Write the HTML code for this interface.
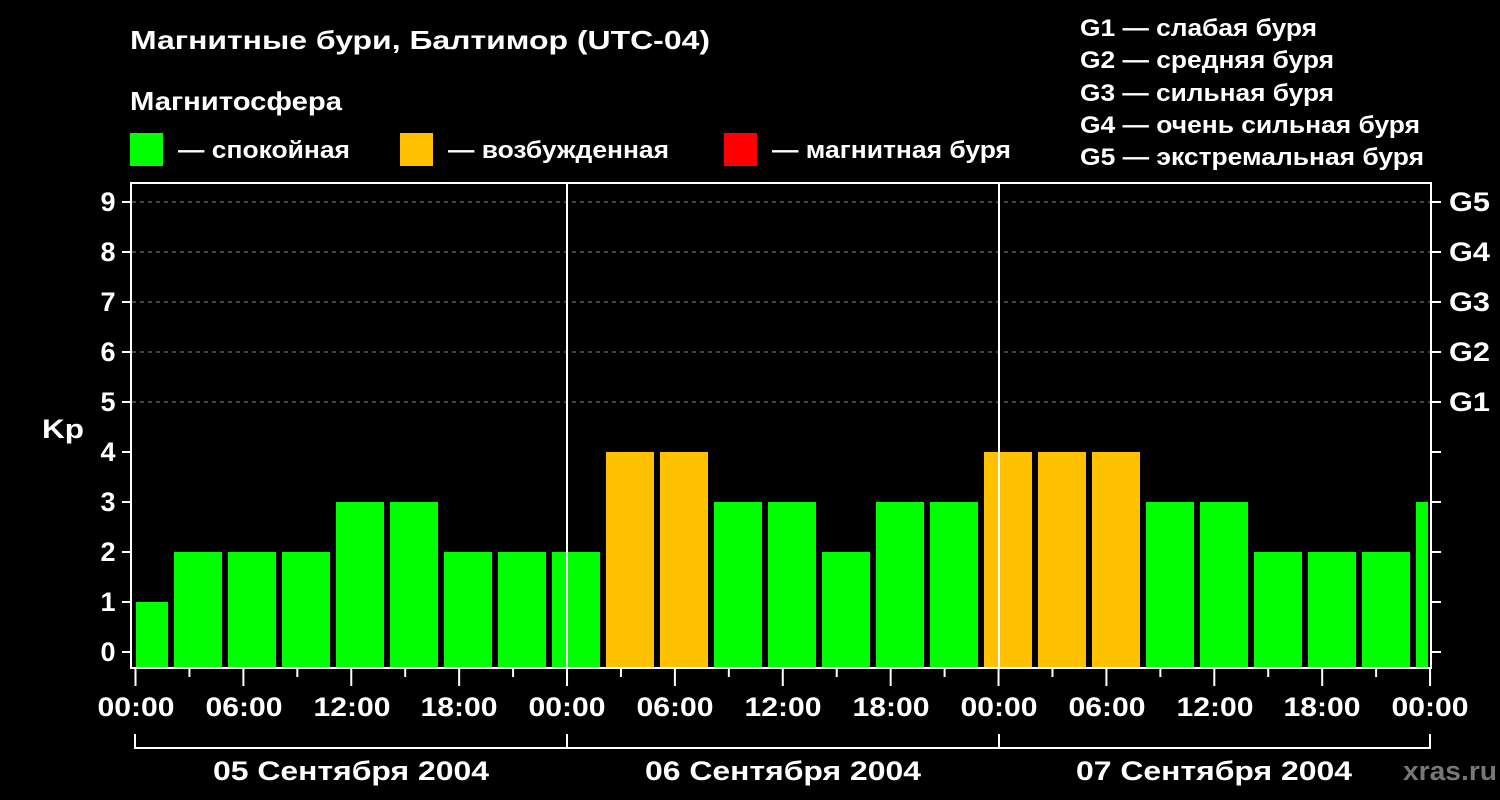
<!DOCTYPE html>
<html><head><meta charset="utf-8"><style>
html,body{margin:0;padding:0;background:#000;}
svg{display:block;font-family:"Liberation Sans",sans-serif;font-weight:bold;}
</style></head><body>
<svg width="1500" height="800" viewBox="0 0 1500 800" xmlns="http://www.w3.org/2000/svg">
<rect width="1500" height="800" fill="#000"/>
<g fill="#fff" font-size="26">
<text x="130" y="49" textLength="580" lengthAdjust="spacingAndGlyphs">Магнитные бури, Балтимор (UTC-04)</text>
<text x="130" y="110" textLength="212" lengthAdjust="spacingAndGlyphs">Магнитосфера</text>
<text x="178" y="158" font-size="24" textLength="172" lengthAdjust="spacingAndGlyphs">— спокойная</text>
<text x="448" y="158" font-size="24" textLength="221" lengthAdjust="spacingAndGlyphs">— возбужденная</text>
<text x="772" y="158" font-size="24" textLength="239" lengthAdjust="spacingAndGlyphs">— магнитная буря</text>
</g>
<rect x="130" y="133" width="33" height="33" fill="#00ff00"/>
<rect x="400" y="133" width="33" height="33" fill="#ffc000"/>
<rect x="724" y="133" width="33" height="33" fill="#ff0000"/>
<g fill="#fff" font-size="24">
<text x="1080" y="36" textLength="237" lengthAdjust="spacingAndGlyphs">G1 — слабая буря</text>
<text x="1080" y="68" textLength="254" lengthAdjust="spacingAndGlyphs">G2 — средняя буря</text>
<text x="1080" y="101" textLength="254" lengthAdjust="spacingAndGlyphs">G3 — сильная буря</text>
<text x="1080" y="133" textLength="340" lengthAdjust="spacingAndGlyphs">G4 — очень сильная буря</text>
<text x="1080" y="165" textLength="344" lengthAdjust="spacingAndGlyphs">G5 — экстремальная буря</text>
</g>
<g stroke="#888" stroke-dasharray="4,4" stroke-width="1">
<line x1="132" y1="202" x2="1431" y2="202"/><line x1="132" y1="252" x2="1431" y2="252"/>
<line x1="132" y1="302" x2="1431" y2="302"/><line x1="132" y1="352" x2="1431" y2="352"/>
<line x1="132" y1="402" x2="1431" y2="402"/>
</g>
<g id="bars">
<rect x="136" y="602" width="32" height="66" fill="#00ff00"/>
</g>
<script>
var v=[2,2,2,3,3,2,2,2,4,4,3,3,2,3,3,4,4,4,3,3,2,2,2,3];
var g=document.getElementById('bars');
for(var k=0;k<24;k++){var x=174+54*k,w=48;if(x+w>1428)w=1428-x;var y=652-50*v[k];
var r=document.createElementNS('http://www.w3.org/2000/svg','rect');
r.setAttribute('x',x);r.setAttribute('y',y);r.setAttribute('width',w);r.setAttribute('height',668-y);
r.setAttribute('fill',v[k]>=4?'#ffc000':'#00ff00');g.appendChild(r);}
</script>
<g stroke="#fff" stroke-width="2" fill="none">
<rect x="131" y="183" width="1300" height="485"/>
<line x1="567" y1="183" x2="567" y2="668"/><line x1="999" y1="183" x2="999" y2="668"/>
<path d="M122 652h9M122 602h9M122 552h9M122 502h9M122 452h9M122 402h9M122 352h9M122 302h9M122 252h9M122 202h9"/>
<path d="M1431 652h10M1431 602h10M1431 552h10M1431 502h10M1431 452h10M1431 402h10M1431 352h10M1431 302h10M1431 252h10M1431 202h10"/>
<path d="M135 734v14h1295v-14M567 734v14M999 734v14"/>
</g>
<g id="ticks" stroke="#fff" stroke-width="2"></g>
<script>
var t=document.getElementById('ticks');
for(var i=0;i<=24;i++){var x=135.5+53.94*i;var l=document.createElementNS('http://www.w3.org/2000/svg','line');
l.setAttribute('x1',x);l.setAttribute('x2',x);l.setAttribute('y1',668);l.setAttribute('y2',i%2?677:686);t.appendChild(l);}
</script>
<g fill="#fff" font-size="27" text-anchor="middle">
<text x="108" y="661">0</text><text x="108" y="611">1</text><text x="108" y="561">2</text><text x="108" y="511">3</text><text x="108" y="461">4</text>
<text x="108" y="411">5</text><text x="108" y="361">6</text><text x="108" y="311">7</text><text x="108" y="261">8</text><text x="108" y="211">9</text>
<text x="63" y="438" textLength="42" lengthAdjust="spacingAndGlyphs">Kp</text>
</g>
<g fill="#fff" font-size="27">
<text x="1449" y="211" textLength="41" lengthAdjust="spacingAndGlyphs">G5</text><text x="1449" y="261" textLength="41" lengthAdjust="spacingAndGlyphs">G4</text><text x="1449" y="311" textLength="41" lengthAdjust="spacingAndGlyphs">G3</text><text x="1449" y="361" textLength="41" lengthAdjust="spacingAndGlyphs">G2</text><text x="1449" y="411" textLength="41" lengthAdjust="spacingAndGlyphs">G1</text>
</g>
<g fill="#fff" font-size="27" text-anchor="middle">
<text x="136" y="716" textLength="77" lengthAdjust="spacingAndGlyphs">00:00</text><text x="244" y="716" textLength="77" lengthAdjust="spacingAndGlyphs">06:00</text><text x="352" y="716" textLength="77" lengthAdjust="spacingAndGlyphs">12:00</text><text x="459" y="716" textLength="77" lengthAdjust="spacingAndGlyphs">18:00</text>
<text x="567" y="716" textLength="77" lengthAdjust="spacingAndGlyphs">00:00</text><text x="675" y="716" textLength="77" lengthAdjust="spacingAndGlyphs">06:00</text><text x="783" y="716" textLength="77" lengthAdjust="spacingAndGlyphs">12:00</text><text x="891" y="716" textLength="77" lengthAdjust="spacingAndGlyphs">18:00</text>
<text x="999" y="716" textLength="77" lengthAdjust="spacingAndGlyphs">00:00</text><text x="1107" y="716" textLength="77" lengthAdjust="spacingAndGlyphs">06:00</text><text x="1215" y="716" textLength="77" lengthAdjust="spacingAndGlyphs">12:00</text><text x="1322" y="716" textLength="77" lengthAdjust="spacingAndGlyphs">18:00</text>
<text x="1430" y="716" textLength="77" lengthAdjust="spacingAndGlyphs">00:00</text>
<text x="351" y="780" textLength="276" lengthAdjust="spacingAndGlyphs">05 Сентября 2004</text><text x="783" y="780" textLength="276" lengthAdjust="spacingAndGlyphs">06 Сентября 2004</text><text x="1214" y="780" textLength="276" lengthAdjust="spacingAndGlyphs">07 Сентября 2004</text>
</g>
<text x="1403" y="780" fill="#777" font-size="27" textLength="94" lengthAdjust="spacingAndGlyphs">xras.ru</text>
</svg>
</body></html>
